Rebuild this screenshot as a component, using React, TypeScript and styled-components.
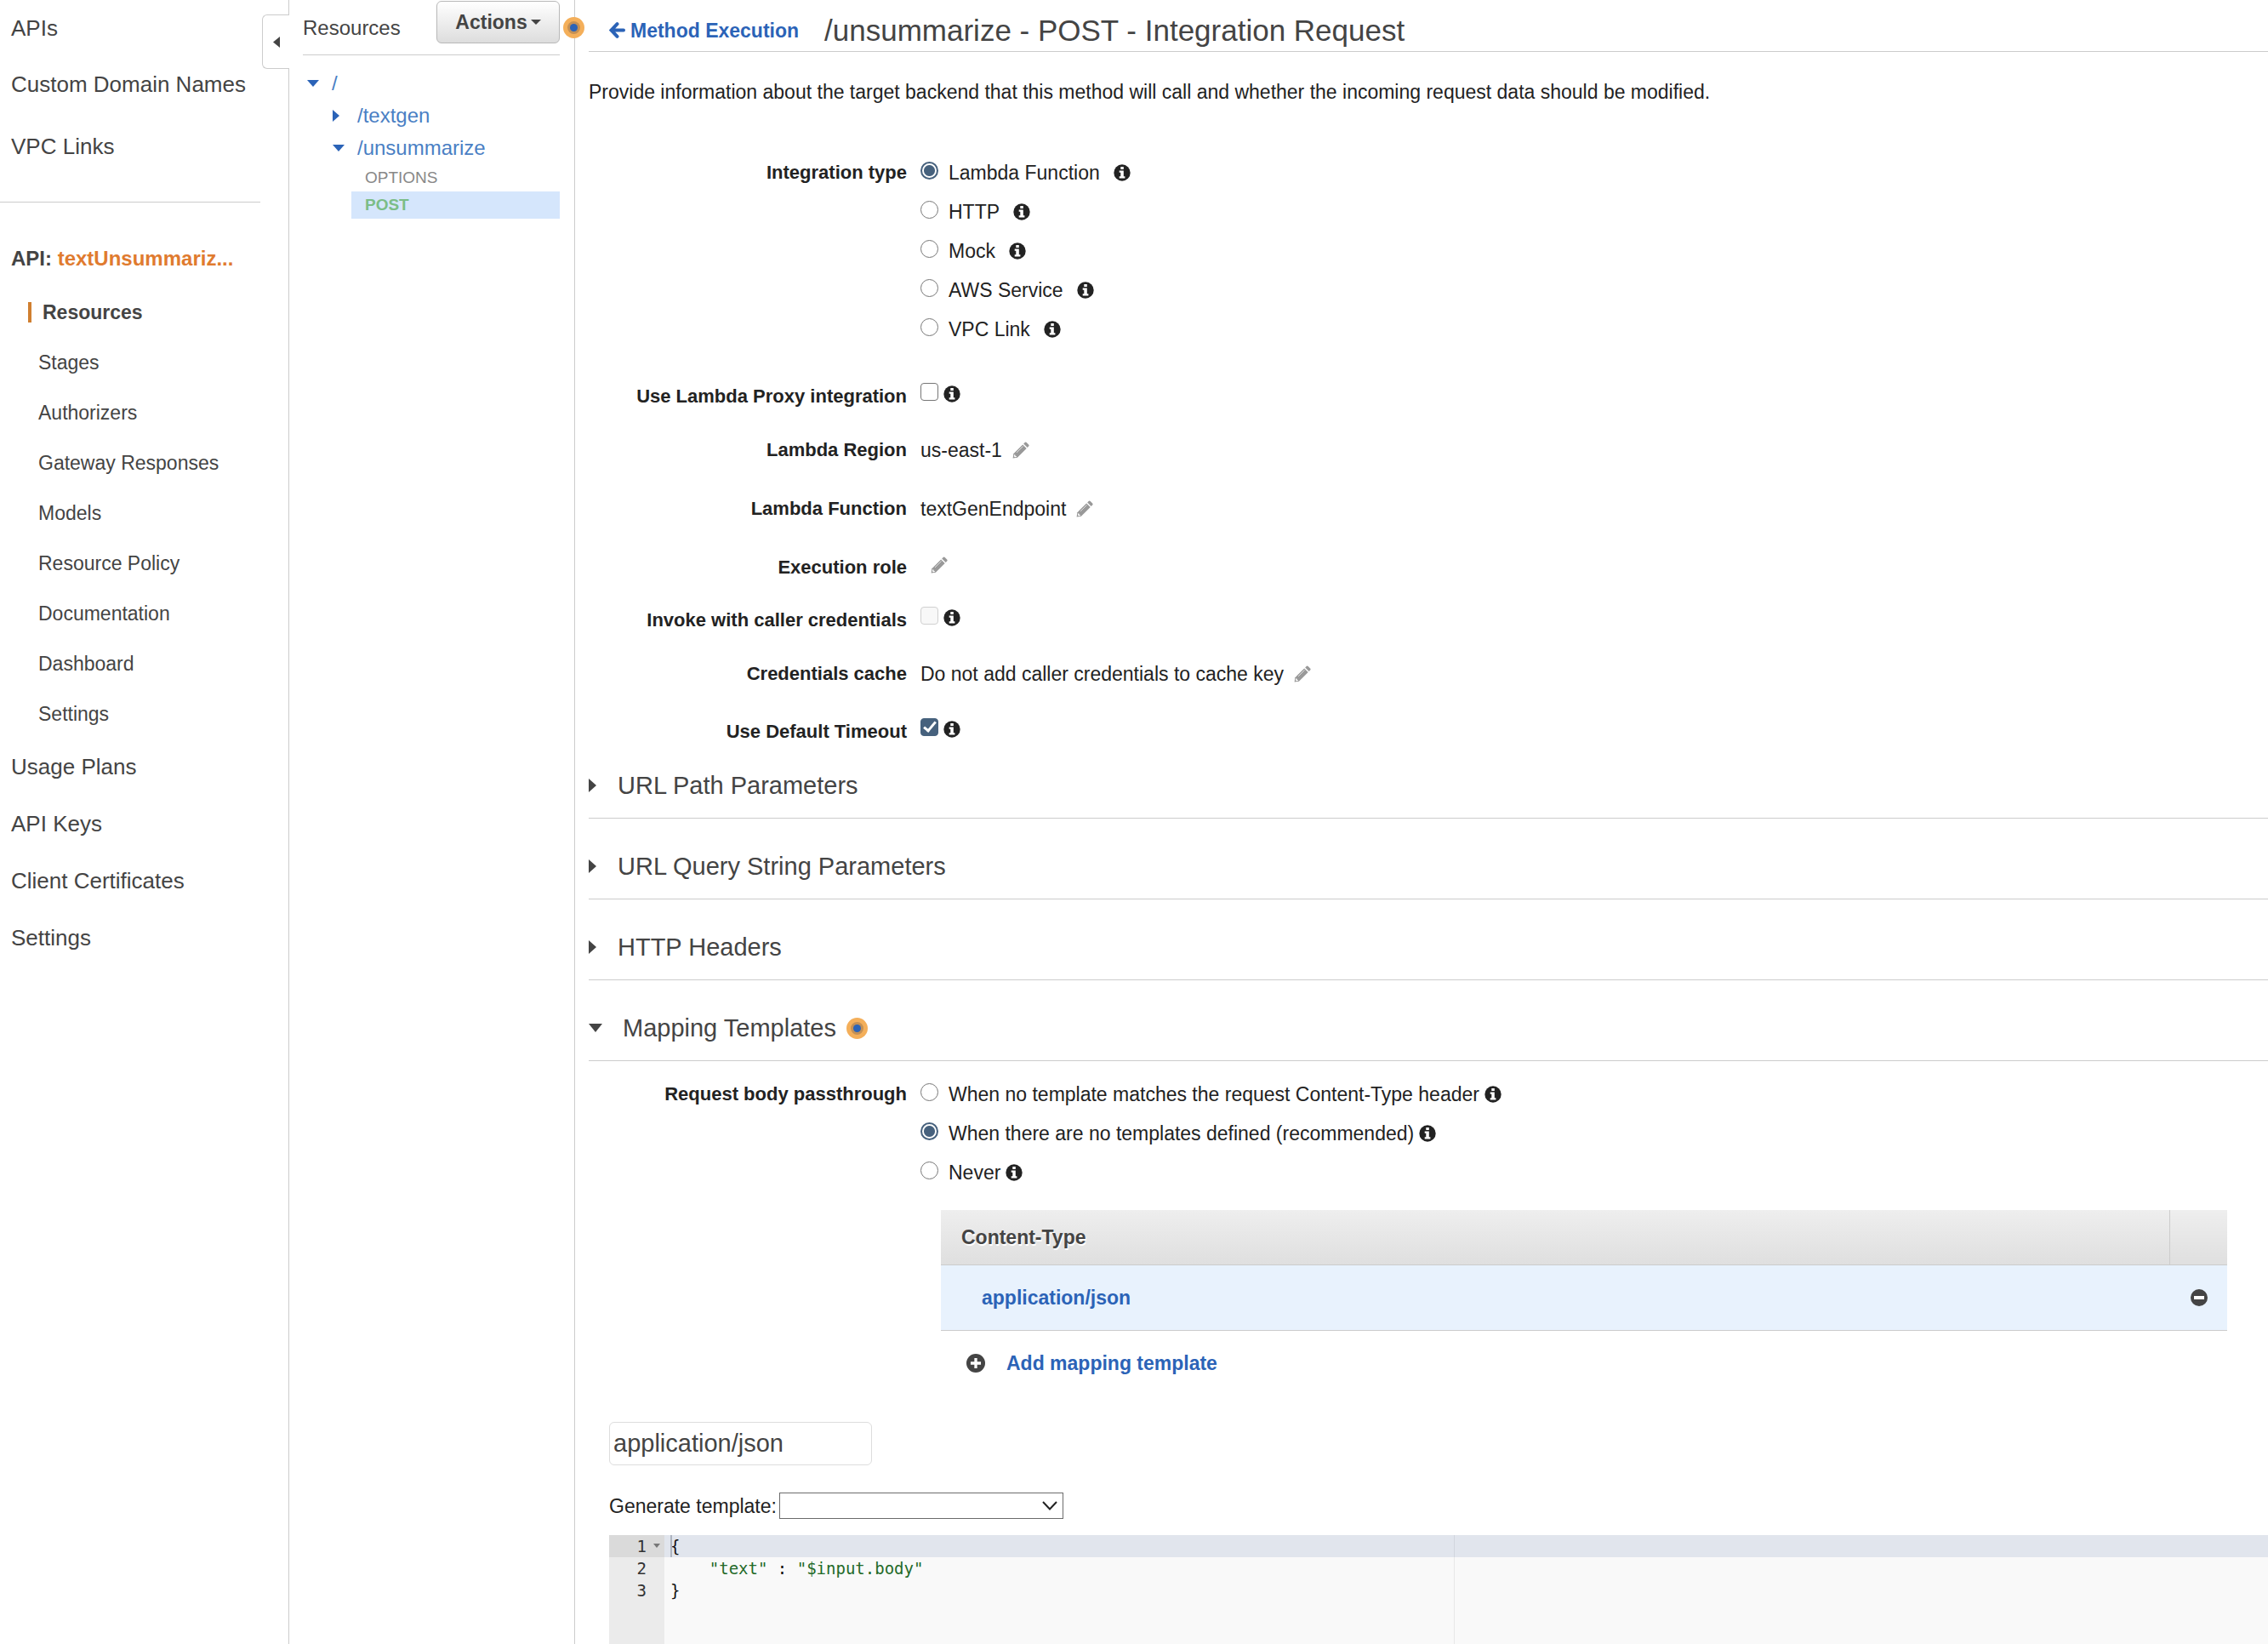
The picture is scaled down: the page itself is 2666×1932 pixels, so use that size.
import React, { useState } from "react";
import styled, { createGlobalStyle, css } from "styled-components";

const ink = "#444";
const body = "#222";
const blue = "#2b63b7";
const line = "#ccc";
const sans = `"Liberation Sans", Arial, sans-serif`;

const GlobalStyle = createGlobalStyle`
  *, *::before, *::after { box-sizing: border-box; }
  body { margin: 0; background: #fff; color: ${body}; font: 23px/32px ${sans}; }
  button, input, select { font: inherit; color: inherit; }
  a { color: inherit; text-decoration: none; }
  h1, h2, p, ul, pre, fieldset { margin: 0; padding: 0; border: 0; }
`;

const Shell = styled.div`
  display: grid;
  grid-template-columns: 340px 336px minmax(0, 1fr);
  min-height: 100vh;
`;

/* ---------- service navigation ---------- */

const Sidebar = styled.nav`
  position: relative;
  border-right: 1px solid ${line};
  color: ${ink};
`;

const NavLink = styled.a<{ $tall?: boolean }>`
  display: block;
  padding-left: 13px;
  font-size: 26px;
  line-height: ${(p) => (p.$tall ? 67 : 66)}px;
`;

const NavGroup = styled.div<{ $spaced?: boolean }>`
  padding-top: ${(p) => (p.$spaced ? 7 : 0)}px;
`;

const NavRule = styled.hr`
  height: 1px;
  margin: 32px 33px 33px 0;
  border: 0;
  background: ${line};
`;

const ApiName = styled.div`
  padding-left: 13px;
  font-size: 24px;
  font-weight: bold;
  line-height: 66px;
  span { color: #e07b2f; }
`;

const SubLink = styled.a<{ $active?: boolean }>`
  display: flex;
  align-items: center;
  height: 59px;
  padding-left: 45px;
  ${(p) =>
    p.$active &&
    css`
      padding-left: 33px;
      font-weight: bold;
      &::before {
        content: "";
        width: 4px;
        height: 24px;
        margin-right: 13px;
        background: #d07f30;
      }
    `}
`;

const CollapseButton = styled.button`
  position: absolute;
  top: 17px;
  right: -1px;
  display: grid;
  place-items: center;
  width: 32px;
  height: 64px;
  padding: 0;
  border: 1px solid ${line};
  border-right: 0;
  border-radius: 6px 0 0 6px;
  background: #fff;
`;

/* ---------- resource tree ---------- */

const ResourcePanel = styled.section`
  position: relative;
  padding: 1px 17px 0 16px;
  border-right: 1px solid ${line};
`;

const PanelHeader = styled.header`
  display: flex;
  justify-content: space-between;
  height: 64px;
  margin-bottom: 14px;
  border-bottom: 1px solid ${line};
`;

const PanelTitle = styled.h2`
  color: ${ink};
  font-size: 24px;
  font-weight: normal;
  line-height: 64px;
`;

const ActionsButton = styled.button`
  display: flex;
  align-items: center;
  justify-content: center;
  gap: 4px;
  width: 145px;
  height: 50px;
  padding: 0;
  border: 1px solid #b8b8b8;
  border-radius: 6px;
  background: linear-gradient(#fff, #ddd);
  color: ${ink};
  font-weight: bold;
`;

const TreeRow = styled.a<{ $level: number }>`
  display: grid;
  grid-template-columns: 29px 1fr;
  align-items: center;
  height: 38px;
  padding-left: ${(p) => 5 + p.$level * 30}px;
  color: #4a7fc4;
  font-size: 24px;
`;

const MethodRow = styled.a<{ $selected?: boolean }>`
  display: block;
  margin-left: 57px;
  padding-left: 16px;
  color: ${(p) => (p.$selected ? "#7bbd87" : "#888")};
  background: ${(p) => (p.$selected ? "#d5e6fc" : "transparent")};
  font-size: 19px;
  font-weight: ${(p) => (p.$selected ? "bold" : "normal")};
  line-height: 32px;
`;

const PinnedHint = styled.span`
  position: absolute;
  top: 20px;
  right: -12px;
  display: flex;
`;

/* ---------- integration request ---------- */

const Main = styled.main`
  min-width: 0;
  padding-left: 16px;
`;

const TitleBar = styled.header`
  display: flex;
  align-items: center;
  gap: 30px;
  height: 61px;
  padding: 11px 0 0 24px;
  border-bottom: 1px solid ${line};
`;

const BackLink = styled.a`
  display: flex;
  align-items: center;
  gap: 6px;
  color: ${blue};
  font-weight: bold;
`;

const Title = styled.h1`
  color: ${ink};
  font-size: 35px;
  font-weight: normal;
  line-height: 50px;
`;

const Intro = styled.p`
  padding: 31px 0 56px;
`;

const FieldGrid = styled.div<{ $tight?: boolean }>`
  display: grid;
  grid-template-columns: 374px minmax(0, 1fr);
  column-gap: 16px;
  align-items: center;
  height: ${(p) => (p.$tight ? 56 : 69)}px;
`;

const FieldLabel = styled.label`
  font-size: 22px;
  font-weight: bold;
  text-align: right;
`;

const FieldValue = styled.div<{ $raised?: boolean; $gap: number }>`
  display: flex;
  align-items: center;
  gap: ${(p) => p.$gap}px;
  padding-bottom: ${(p) => (p.$raised ? 6 : 0)}px;
`;

const RadioSet = styled.fieldset`
  display: grid;
  grid-template-columns: 374px minmax(0, 1fr);
  column-gap: 16px;
  min-width: 0;
`;

const RadioTitle = styled.div`
  font-size: 22px;
  font-weight: bold;
  line-height: 46px;
  text-align: right;
`;

const RadioRow = styled.div<{ $gap: number }>`
  display: flex;
  align-items: center;
  gap: ${(p) => p.$gap}px;
  height: 46px;
  label { display: flex; align-items: center; gap: 12px; }
`;

const Radio = styled.input.attrs({ type: "radio" })`
  appearance: none;
  width: 21px;
  height: 21px;
  margin: 0 0 5px;
  border: 1px solid #767676;
  border-radius: 50%;
  background: #fff;
  &:checked {
    border: 2px solid #46617d;
    background: radial-gradient(circle, #46617d 6px, #fff 7px);
  }
`;

const Checkbox = styled.input.attrs({ type: "checkbox" })`
  appearance: none;
  display: grid;
  place-items: center;
  width: 21px;
  height: 21px;
  margin: 0 0 5px;
  border: 1px solid #767676;
  border-radius: 4px;
  background: #fff;
  &:disabled { border-color: #d0d0d0; background: #f8f8f8; }
  &:checked { border-color: #46617d; background: #46617d; }
  &:checked::before {
    content: "";
    width: 8px;
    height: 15px;
    margin-bottom: 4px;
    border: solid #fff;
    border-width: 0 3px 3px 0;
    transform: rotate(40deg);
  }
`;

const IconButton = styled.button`
  display: flex;
  padding: 0;
  border: 0;
  background: none;
`;

const Space = styled.div<{ $height: number }>`
  height: ${(p) => p.$height}px;
`;

const Sections = styled.div`
  display: grid;
  gap: 37px;
  padding-top: 16px;
`;

const SectionToggle = styled.button<{ $open?: boolean }>`
  display: flex;
  align-items: center;
  gap: ${(p) => (p.$open ? 24 : 25)}px;
  width: 100%;
  padding: 0 0 19px;
  border: 0;
  border-bottom: 1px solid ${line};
  background: none;
  color: ${ink};
  font-size: 29px;
  line-height: 38px;
  text-align: left;
`;

const SectionName = styled.span`
  display: flex;
  align-items: center;
  gap: 12px;
`;

const Mapping = styled.div`
  padding-top: 16px;
`;

const TypeArea = styled.div`
  margin: 21px 48px 0 414px;
`;

const TypeTable = styled.table`
  width: 100%;
  border-collapse: collapse;
  th, td { padding: 0; border-bottom: 1px solid ${line}; text-align: left; }
  th {
    height: 64px;
    padding-left: 24px;
    background: linear-gradient(#eee, #dfdfdf);
    color: ${ink};
    text-shadow: 1px 2px 0 #fff;
  }
  th:last-child { width: 68px; border-left: 1px solid ${line}; }
  td { height: 77px; padding-left: 48px; background: #e8f2fd; }
  td:last-child { padding-left: 25px; }
  a { color: ${blue}; font-weight: bold; }
`;

const AddRow = styled.button`
  display: flex;
  align-items: center;
  gap: 25px;
  height: 76px;
  padding: 0 0 0 30px;
  border: 0;
  background: none;
  color: ${blue};
  font-weight: bold;
`;

const Template = styled.div`
  padding: 31px 0 0 24px;
`;

const TypeInput = styled.input`
  display: block;
  width: 309px;
  height: 51px;
  padding: 0 4px;
  border: 1px solid #ddd;
  border-radius: 6px;
  color: ${ink};
  font-size: 29px;
`;

const GenerateRow = styled.div`
  display: flex;
  align-items: center;
  gap: 3px;
  padding: 32px 0 18px;
`;

const SelectBox = styled.div`
  display: grid;
  align-items: center;
  justify-items: end;
  > * { grid-area: 1 / 1; }
  svg { margin-right: 7px; pointer-events: none; }
`;

const Select = styled.select`
  appearance: none;
  width: 334px;
  height: 31px;
  border: 1px solid #6b6b6b;
  border-radius: 0;
  background: #fff;
`;

const Editor = styled.div`
  position: relative;
  display: grid;
  grid-template-columns: 65px minmax(0, 1fr);
  height: 129px;
  overflow: hidden;
  background: #f9f9f9;
  font: 19px/26px "DejaVu Sans Mono", monospace;
`;

const Gutter = styled.div`
  background: #ebebeb;
  color: #333;
`;

const LineNumber = styled.div<{ $active?: boolean }>`
  display: grid;
  grid-template-columns: 44px 1fr;
  align-items: center;
  justify-items: end;
  height: 26px;
  padding-right: 5px;
  background: ${(p) => (p.$active ? "#dadada" : "transparent")};
`;

const Code = styled.pre`
  font: inherit;
  color: #111;
  background: linear-gradient(#e8e8e8, #e8e8e8) 928px 0 / 1px 100% no-repeat;
`;

const CodeLine = styled.div<{ $active?: boolean }>`
  height: 26px;
  padding-left: 7px;
  background: ${(p) => (p.$active ? "rgba(60, 90, 160, 0.12)" : "transparent")};
  span { color: #236a28; }
`;

const Cursor = styled.i`
  position: absolute;
  top: 0;
  left: 72px;
  width: 2px;
  height: 26px;
  background: #aeb4c0;
`;

/* ---------- drawings ---------- */

const Caret = ({ dir, w, h, color = ink }: { dir: "left" | "right" | "down"; w: number; h: number; color?: string }) => {
  const points = {
    left: `${w},0 0,${h / 2} ${w},${h}`,
    right: `0,0 ${w},${h / 2} 0,${h}`,
    down: `0,0 ${w},0 ${w / 2},${h}`,
  }[dir];
  return (
    <svg width={w} height={h} aria-hidden="true">
      <polygon points={points} fill={color} />
    </svg>
  );
};

const Hint = () => (
  <svg width="25" height="25" viewBox="0 0 25 25" aria-hidden="true">
    <circle cx="12.5" cy="12.5" r="12.5" fill="#f4af5a" />
    <circle cx="12.5" cy="12.5" r="7.5" fill="#c49055" />
    <circle cx="12.5" cy="12.5" r="4.5" fill="#2b63b7" />
  </svg>
);

const Info = () => (
  <svg width="20" height="20" viewBox="0 0 20 20" role="img" aria-label="Info">
    <circle cx="10" cy="10" r="9.7" fill={body} />
    <path d="M8.3 3h3.5v3H8.300zM6.700 7.400h5.100v6.800h1.600v2.300H6.700v-2.300h1.600V9.700H6.700z" fill="#fff" />
  </svg>
);

const Pencil = () => (
  <svg width="20" height="20" viewBox="0 0 20 20" aria-hidden="true">
    <path d="M14.600 1a1.500 1.500 0 0 1 2.100 0l2.400 2.400a1.500 1.500 0 0 1 0 2.100l-1.400 1.400-4.500-4.500z" fill="#999" />
    <path d="M12.200 3.400l4.500 4.500L5.900 18.700l-5.300.8.800-5.300z" fill="#999" />
    <path d="M5 12.900l7.600-7.500" stroke="#ddd" fill="none" />
    <path d="M2.300 15.300l1 .2.200 1.200 1.200.2.200 1-2 .4-1-1z" fill="#fff" />
  </svg>
);

const Arrow = () => (
  <svg width="19" height="19" viewBox="0 0 19 19" aria-hidden="true">
    <path d="M9.500 2.200 2.500 9.500l7 7.300M3 9.500h14" fill="none" stroke={blue} strokeWidth="4" strokeLinecap="round" />
  </svg>
);

const RoundSign = ({ size, plus }: { size: number; plus?: boolean }) => (
  <svg width={size} height={size} viewBox="0 0 20 20" aria-hidden="true">
    <circle cx="10" cy="10" r="10" fill={ink} />
    <path d={plus ? "M4.500 8.500h4v-4h3v4h4v3h-4v4h-3v-4h-4z" : "M4 8h12v4H4z"} fill="#fff" />
  </svg>
);

const Chevron = () => (
  <svg width="18" height="11" viewBox="0 0 18 11" aria-hidden="true">
    <path d="M1 1l8 8.500L17 1" fill="none" stroke="#222" strokeWidth="2" />
  </svg>
);

/* ---------- composed parts ---------- */

const subLinks = ["Resources", "Stages", "Authorizers", "Gateway Responses", "Models", "Resource Policy", "Documentation", "Dashboard", "Settings"];
const integrationTypes = ["Lambda Function", "HTTP", "Mock", "AWS Service", "VPC Link"];
const passthrough = [
  "When no template matches the request Content-Type header",
  "When there are no templates defined (recommended)",
  "Never",
];

const RadioField = ({ title, name, options, initial, gap }: { title: string; name: string; options: string[]; initial: string; gap: number }) => {
  const [value, setValue] = useState(initial);
  return (
    <RadioSet aria-label={title}>
      <RadioTitle>{title}</RadioTitle>
      <div>
        {options.map((o) => (
          <RadioRow key={o} $gap={gap}>
            <label>
              <Radio name={name} checked={value === o} onChange={() => setValue(o)} />
              {o}
            </label>
            <Info />
          </RadioRow>
        ))}
      </div>
    </RadioSet>
  );
};

const CheckField = ({ id, label, checked, disabled }: { id: string; label: string; checked?: boolean; disabled?: boolean }) => (
  <FieldGrid $tight>
    <FieldLabel htmlFor={id}>{label}</FieldLabel>
    <FieldValue $raised $gap={6}>
      <Checkbox id={id} defaultChecked={checked} disabled={disabled} />
      <Info />
    </FieldValue>
  </FieldGrid>
);

const EditField = ({ label, value }: { label: string; value?: string }) => (
  <FieldGrid>
    <FieldLabel as="div">{label}</FieldLabel>
    <FieldValue $gap={12} $raised={!value}>
      <span>{value}</span>
      <IconButton aria-label={`Edit ${label}`}>
        <Pencil />
      </IconButton>
    </FieldValue>
  </FieldGrid>
);

export default function App() {
  return (
    <>
      <GlobalStyle />
      <Shell>
        <Sidebar>
          <NavLink href="#">APIs</NavLink>
          <NavLink href="#">Custom Domain Names</NavLink>
          <NavGroup $spaced>
            <NavLink href="#">VPC Links</NavLink>
          </NavGroup>
          <NavRule />
          <ApiName>
            API: <span>textUnsummariz...</span>
          </ApiName>
          {subLinks.map((s, i) => (
            <SubLink key={s} href="#" $active={i === 0}>
              {s}
            </SubLink>
          ))}
          <NavGroup>
            {["Usage Plans", "API Keys", "Client Certificates", "Settings"].map((s) => (
              <NavLink key={s} href="#" $tall>
                {s}
              </NavLink>
            ))}
          </NavGroup>
          <CollapseButton aria-label="Collapse navigation">
            <Caret dir="left" w={8} h={13} />
          </CollapseButton>
        </Sidebar>

        <ResourcePanel>
          <PanelHeader>
            <PanelTitle>Resources</PanelTitle>
            <ActionsButton>
              Actions
              <Caret dir="down" w={12} h={6} />
            </ActionsButton>
          </PanelHeader>
          <TreeRow href="#" $level={0}>
            <Caret dir="down" w={14} h={8} color={blue} />/
          </TreeRow>
          <TreeRow href="#" $level={1}>
            <Caret dir="right" w={8} h={14} color={blue} />
            /textgen
          </TreeRow>
          <TreeRow href="#" $level={1}>
            <Caret dir="down" w={14} h={8} color={blue} />
            /unsummarize
          </TreeRow>
          <MethodRow href="#">OPTIONS</MethodRow>
          <MethodRow href="#" $selected>
            POST
          </MethodRow>
          <PinnedHint>
            <Hint />
          </PinnedHint>
        </ResourcePanel>

        <Main>
          <TitleBar>
            <BackLink href="#">
              <Arrow />
              Method Execution
            </BackLink>
            <Title>/unsummarize - POST - Integration Request</Title>
          </TitleBar>
          <Intro>Provide information about the target backend that this method will call and whether the incoming request data should be modified.</Intro>

          <RadioField title="Integration type" name="integration" options={integrationTypes} initial="Lambda Function" gap={16} />
          <Space $height={28} />
          <CheckField id="proxy" label="Use Lambda Proxy integration" />
          <EditField label="Lambda Region" value="us-east-1" />
          <EditField label="Lambda Function" value="textGenEndpoint" />
          <EditField label="Execution role" />
          <CheckField id="caller" label="Invoke with caller credentials" disabled />
          <EditField label="Credentials cache" value="Do not add caller credentials to cache key" />
          <Space $height={6} />
          <CheckField id="timeout" label="Use Default Timeout" checked />

          <Sections>
            {["URL Path Parameters", "URL Query String Parameters", "HTTP Headers"].map((s) => (
              <SectionToggle key={s} aria-expanded="false">
                <Caret dir="right" w={9} h={16} />
                {s}
              </SectionToggle>
            ))}
            <SectionToggle $open aria-expanded="true">
              <Caret dir="down" w={16} h={10} />
              <SectionName>
                Mapping Templates
                <Hint />
              </SectionName>
            </SectionToggle>
          </Sections>

          <Mapping>
            <RadioField title="Request body passthrough" name="passthrough" options={passthrough} initial={passthrough[1]} gap={6} />
            <TypeArea>
              <TypeTable>
                <thead>
                  <tr>
                    <th scope="col">Content-Type</th>
                    <th aria-label="Remove" />
                  </tr>
                </thead>
                <tbody>
                  <tr>
                    <td>
                      <a href="#">application/json</a>
                    </td>
                    <td>
                      <IconButton aria-label="Remove application/json">
                        <RoundSign size={20} />
                      </IconButton>
                    </td>
                  </tr>
                </tbody>
              </TypeTable>
              <AddRow>
                <RoundSign size={22} plus />
                Add mapping template
              </AddRow>
            </TypeArea>
            <Template>
              <TypeInput aria-label="Content type" defaultValue="application/json" />
              <GenerateRow>
                <label htmlFor="generate">Generate template:</label>
                <SelectBox>
                  <Select id="generate" defaultValue="">
                    <option value=""></option>
                  </Select>
                  <Chevron />
                </SelectBox>
              </GenerateRow>
              <Editor>
                <Gutter>
                  <LineNumber $active>
                    1<Caret dir="down" w={8} h={5} color="#777" />
                  </LineNumber>
                  <LineNumber>2</LineNumber>
                  <LineNumber>3</LineNumber>
                </Gutter>
                <Code>
                  <CodeLine $active>{"{"}</CodeLine>
                  <CodeLine>
                    {"    "}
                    <span>"text"</span> : <span>"$input.body"</span>
                  </CodeLine>
                  <CodeLine>{"}"}</CodeLine>
                </Code>
                <Cursor />
              </Editor>
            </Template>
          </Mapping>
        </Main>
      </Shell>
    </>
  );
}
